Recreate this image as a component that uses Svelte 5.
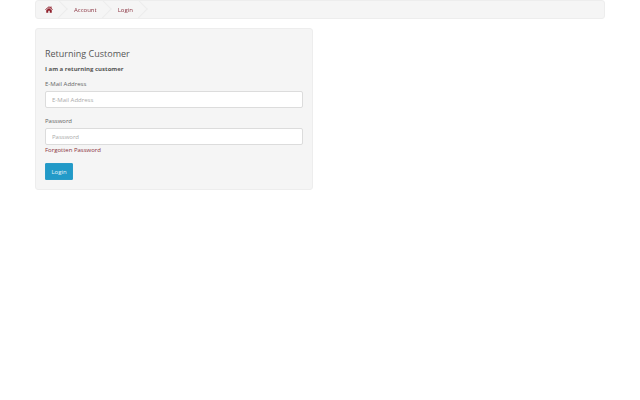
<script>
    let crumbs = ['Account', 'Login'];
</script>

<main class="container">
    <ul class="breadcrumb">
        <li>
            <a class="home-link" href="#home" aria-label="Home">
                <svg class="home" viewBox="0 0 16 14" width="8" height="7">
                    <path d="M8 0.5 L0.3 7 L1.3 8.2 L8 2.6 L14.7 8.2 L15.7 7 L13 4.7 V1 H11 V3 Z M8 3.8 L2.5 8.4 V13.5 H6.5 V9.5 H9.5 V13.5 H13.5 V8.4 Z" fill="#8f1f2b" />
                </svg>
            </a>
        </li>
        {#each crumbs as crumb}
            <li><a href="#crumb">{crumb}</a></li>
        {/each}
    </ul>

    <div class="well">
        <h2>Returning Customer</h2>
        <p class="lead"><strong>I am a returning customer</strong></p>
        <div class="group">
            <label for="email">E-Mail Address</label>
            <input id="email" type="text" placeholder="E-Mail Address" />
        </div>
        <div class="group last">
            <label for="password">Password</label>
            <input id="password" type="password" placeholder="Password" />
            <a class="forgot" href="#forgot">Forgotten Password</a>
        </div>
        <button type="button">Login</button>
    </div>
</main>

<style>
    :global(body) {
        background: #fff;
        font-family: "Open Sans", sans-serif;
        font-size: 6px;
        color: #666;
    }

    .container {
        width: 570px;
        margin-left: 35px;
        filter: blur(0.4px);
    }

    .breadcrumb {
        display: flex;
        height: 19px;
        box-sizing: border-box;
        margin: 0 0 9px;
        padding: 0;
        list-style: none;
        background: #f5f5f5;
        border: 1px solid #ededed;
        border-radius: 3px;
        overflow: hidden;
    }

    .breadcrumb li {
        position: relative;
        display: flex;
        align-items: center;
        padding: 0 10px 0 11px;
    }

    .breadcrumb li:first-child {
        padding: 0 10px 0 9px;
    }

    .breadcrumb li::after {
        content: "";
        position: absolute;
        top: 1px;
        right: -2px;
        width: 13px;
        height: 13px;
        border-right: 1px solid #ececec;
        border-top: 1px solid #ececec;
        transform: rotate(45deg);
    }

    a {
        color: #8a3340;
        text-decoration: none;
    }

    .home-link {
        margin-top: -1px;
    }

    .home {
        display: block;
    }

    .well {
        width: 278px;
        height: 162px;
        box-sizing: border-box;
        padding: 18px 9px 0;
        background: #f5f5f5;
        border: 1px solid #ededed;
        border-radius: 3px;
    }

    h2 {
        margin: 0;
        font-size: 9px;
        line-height: 13px;
        font-weight: 400;
        color: #555;
    }

    .lead {
        margin: 4px 0 5px;
        line-height: 10px;
        color: #555;
    }

    .group {
        margin-bottom: 8px;
    }

    .group.last {
        margin-bottom: 8px;
    }

    label {
        display: block;
        margin-bottom: 2px;
        line-height: 10px;
        color: #666;
    }

    input {
        display: block;
        width: 258px;
        height: 17px;
        box-sizing: border-box;
        padding: 0 6px;
        font: inherit;
        color: #666;
        background: #fff;
        border: 1px solid #dcdcdc;
        border-radius: 2px;
        outline: none;
    }

    input::placeholder {
        color: #aaa;
        opacity: 1;
    }

    .forgot {
        display: block;
        margin-top: 0;
        line-height: 10px;
    }

    button {
        display: block;
        width: 28px;
        height: 17px;
        padding: 0;
        font: inherit;
        color: #e4f3f9;
        background: #229ac8;
        border: 1px solid #2a9cc8;
        border-radius: 1px;
    }
</style>
